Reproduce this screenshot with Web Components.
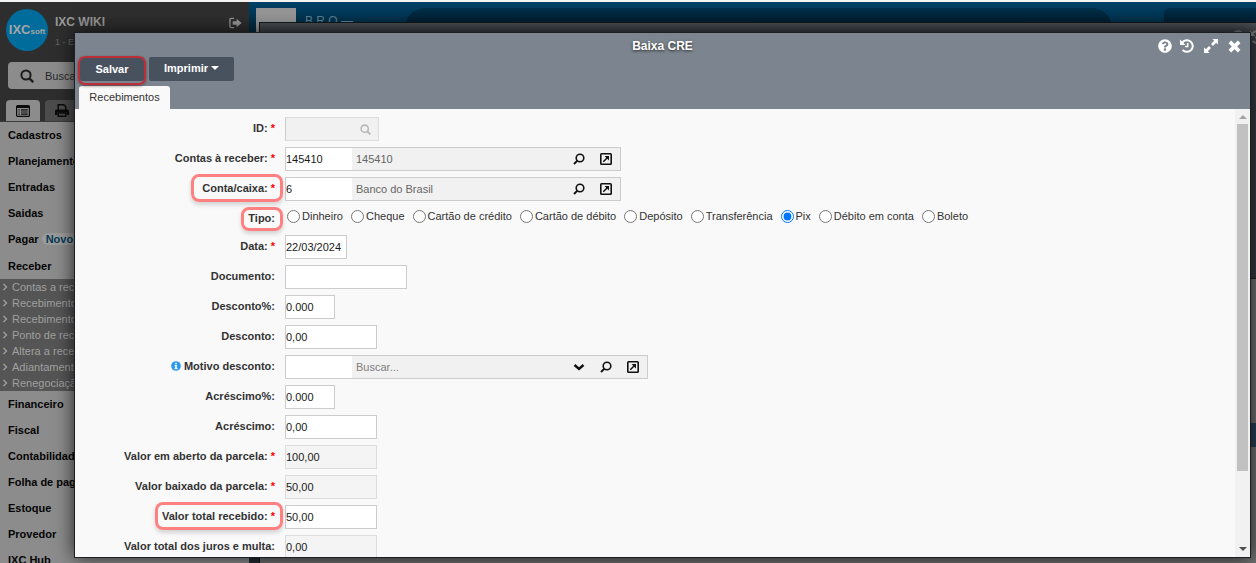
<!DOCTYPE html>
<html lang="pt-BR">
<head>
<meta charset="utf-8">
<title>Baixa CRE</title>
<style>
  html, body { height: 100%; margin: 0; }
  body { font: 11px/16px "Liberation Sans", Arial, sans-serif; color: #333; overflow: hidden; }
</style>
</head>
<body>
<app-shell>
  <side-menu slot="side"></side-menu>
  <back-desktop slot="main"></back-desktop>
  <modal-window slot="modal" heading="Baixa CRE">
    <form-field label="ID" required kind="id"></form-field>
    <form-field label="Contas à receber" required kind="lookup" value="145410" text="145410"></form-field>
    <form-field label="Conta/caixa" required kind="lookup" value="6" text="Banco do Brasil" mark="wide"></form-field>
    <radio-field label="Tipo" selected="Pix" options="Dinheiro|Cheque|Cartão de crédito|Cartão de débito|Depósito|Transferência|Pix|Débito em conta|Boleto"></radio-field>
    <form-field label="Data" required value="22/03/2024" size="date"></form-field>
    <form-field label="Documento" size="doc"></form-field>
    <form-field label="Desconto%" value="0.000" size="percent"></form-field>
    <form-field label="Desconto" value="0,00"></form-field>
    <form-field label="Motivo desconto" kind="lookup" hint="Buscar..." info></form-field>
    <form-field label="Acréscimo%" value="0.000" size="percent"></form-field>
    <form-field label="Acréscimo" value="0,00"></form-field>
    <form-field label="Valor em aberto da parcela" required value="100,00" locked></form-field>
    <form-field label="Valor baixado da parcela" required value="50,00" locked></form-field>
    <form-field label="Valor total recebido" required value="50,00" mark></form-field>
    <form-field label="Valor total dos juros e multa" value="0,00" locked></form-field>
  </modal-window>
</app-shell>

<script>
const define = (name, render) => customElements.define(name, class extends HTMLElement {
  constructor() { super(); this.attachShadow({ mode: 'open' }); }
  connectedCallback() {
    if (this.shadowRoot.childNodes.length) return;
    const t = document.createElement('template');
    t.innerHTML = '<style>:host,*,*::before,*::after{box-sizing:border-box}</style>' + render(this);
    this.shadowRoot.append(t.content.cloneNode(true));
  }
});

const ICONS = {
  help: ['0 0 512 512', '<path fill="currentColor" d="M504 256c0 136.997-111.043 248-248 248S8 392.997 8 256C8 119.083 119.043 8 256 8s248 111.083 248 248zM262.655 90c-54.497 0-89.255 22.957-116.549 63.758-3.536 5.286-2.353 12.415 2.715 16.258l34.699 26.31c5.205 3.947 12.621 3.008 16.665-2.122 17.864-22.658 30.113-35.797 57.303-35.797 20.429 0 45.698 13.148 45.698 32.958 0 14.976-12.363 22.667-32.534 33.976C247.128 238.528 216 254.941 216 296v4c0 6.627 5.373 12 12 12h56c6.627 0 12-5.373 12-12v-1.333c0-28.462 83.186-29.647 83.186-106.667 0-58.002-60.165-102-116.531-102zM256 338c-25.365 0-46 20.635-46 46 0 25.364 20.635 46 46 46s46-20.636 46-46c0-25.365-20.635-46-46-46z"/>'],
  history: ['0 0 14 14', '<g fill="none" stroke="currentColor"><path stroke-width="2" d="M2.3 3.6A5.8 5.8 0 1 1 2.6 10.9"/><path stroke-width="1.5" d="M7.7 4v3.6H5"/></g><path fill="currentColor" d="M0 .6V6h5.4z"/>'],
  expand: ['0 0 14 14', '<path fill="currentColor" d="M8.400 0H14v5.600L12.200 3.800 9 7 7 5l3.200-3.200zM5.600 14H0V8.400l1.800 1.800L5 7l2 2-3.200 3.200z"/>'],
  close: ['0 0 14 14', '<path stroke="currentColor" stroke-width="4" d="M2 2l10 10M12 2L2 12"/>'],
  search: ['0 0 14 14', '<g fill="none" stroke="currentColor" stroke-width="2"><circle cx="6" cy="6" r="4.600"/><path stroke-width="2.400" d="M9.500 9.500l3.700 3.700"/></g>'],
  lens: ['0 0 12 12', '<g fill="none" stroke="currentColor" stroke-width="1.600"><circle cx="7" cy="5" r="3.800"/><path stroke-width="2" d="M4.400 7.600L1 11"/></g>'],
  open: ['0 0 12 12', '<rect x=".8" y=".8" width="10.400" height="10.400" rx=".8" fill="none" stroke="currentColor" stroke-width="1.600"/><path stroke="currentColor" stroke-width="1.500" d="M3.300 8.700l4-4"/><path fill="currentColor" d="M4.500 3H9v4.500z"/>'],
  down: ['0 0 12 12', '<path fill="none" stroke="currentColor" stroke-width="2.400" d="M1.500 4L6 8l4.500-4"/>'],
  info: ['0 0 12 12', '<circle cx="6" cy="6" r="5.800" fill="currentColor"/><path fill="#fff" d="M5 2h2v1.800H5zM4.300 4.800H7v3.600h.8v1.400H4.300V8.400H5V6.200h-.7z"/>'],
  logout: ['0 0 14 12', '<path fill="none" stroke="currentColor" stroke-width="1.400" d="M5.500 1H2.200Q1 1 1 2.200v7.600Q1 11 2.200 11h3.300"/><path fill="currentColor" d="M4 4h4.200V1.400L13.600 6 8.200 10.600V8H4z"/>'],
  list: ['0 0 14 12', '<rect x=".6" y=".6" width="12.800" height="10.800" rx="1" fill="none" stroke="currentColor" stroke-width="1.200"/><path fill="currentColor" d="M1 1h12v2H1zM2.500 4.200h1.300v1.200H2.500zM5 4.200h6.800v1.200H5zM2.500 6.400h1.300v1.200H2.500zM5 6.400h6.800v1.200H5zM2.500 8.600h1.300v1.200H2.500zM5 8.600h6.800v1.200H5z"/>'],
  print: ['0 0 14 13', '<path fill="none" stroke="currentColor" stroke-width="1.400" d="M3.200 6V.8h5.600l2 2V6M3.200 9h7.600v3.200H3.200z"/><path fill="currentColor" d="M0 7.200Q0 5.600 1.600 5.600h10.800Q14 5.600 14 7.200V11h-2.400V8.400H2.400V11H0z"/>'],
  angle: ['0 0 6 8', '<path fill="none" stroke="currentColor" stroke-width="1.300" d="M1.500 1l3 3-3 3"/>']
};
const icon = (n, w, h = w) => `<svg width="${w}" height="${h}" viewBox="${ICONS[n][0]}" aria-hidden="true">${ICONS[n][1]}</svg>`;

define('app-shell', () => `
<style>
  :host { display: flex; position: relative; height: 100vh; overflow: hidden; border-top: 2px solid #f5f2f2; background: #707070; }
  .side { flex: 0 0 249px; }
  .main { flex: 1; min-width: 0; }
  .modal { position: absolute; inset: 30px 5px 5px 74px; }
  ::slotted(*) { height: 100%; }
</style>
<div class="side"><slot name="side"></slot></div>
<div class="main"><slot name="main"></slot></div>
<div class="modal"><slot name="modal"></slot></div>`);

define('side-menu', () => {
  const item = t => `<li><a href="#">${t}</a></li>`;
  const sub = ['Contas a receber', 'Recebimentos', 'Recebimentos', 'Ponto de recebimento', 'Altera a receber', 'Adiantamentos', 'Renegociação'];
  return `
<style>
  :host { display: flex; flex-direction: column; background: #8c8c8c; overflow: hidden; color: #050505; }
  header { background: #2e2e2e; color: #999; padding: 7px 7px 0 6px; height: 120px; display: flex; flex-direction: column; border-bottom: 1px solid #3c3c3c; flex: none; }
  .who { display: flex; gap: 7px; height: 42px; }
  .logo { width: 42px; height: 42px; border-radius: 50%; background: #006c9c; color: #a5a5a5; font: bold 13px/42px "Liberation Sans", sans-serif; text-align: center; white-space: nowrap; }
  .logo small { font-size: 8px; }
  .name { flex: 1; display: flex; flex-direction: column; gap: 4px; padding-top: 5px; font-size: 12px; }
  .name span { font-size: 9px; color: #666; }
  .who button { align-self: flex-start; margin-top: 8px; }
  button { border: 0; background: none; color: inherit; padding: 0; display: grid; place-items: center; }
  .find { display: flex; align-items: center; gap: 11px; height: 27px; margin: 11px 0 0 2px; padding-left: 12px; border-radius: 4px; background: #8c8c8c; color: #1c1c1c; }
  .find input { border: 0; background: none; font: inherit; padding: 0; flex: 1; min-width: 0; outline: 0; }
  .find input::placeholder { color: #2a2a2a; }
  nav { display: flex; gap: 5px; margin-top: auto; }
  nav button { width: 34px; height: 21px; border-radius: 4px 4px 0 0; background: #4c4c4c; color: #0a0a0a; }
  nav button.on { background: #8c8c8c; }
  ul { list-style: none; margin: 0; padding: 0; }
  a { color: inherit; text-decoration: none; }
  .menu > li { font-weight: bold; line-height: 26px; padding-left: 8px; }
  .menu > li.tall { line-height: 27px; }
  mark { background: #9b9b9b; color: #073b57; border-radius: 6px; padding: 0 4px; line-height: 12px; }
  .sub { background: #555; color: #a0a0a0; font-weight: normal; margin-left: -8px; }
  .sub li { display: flex; align-items: center; gap: 4px; padding-left: 2px; line-height: 16px; white-space: nowrap; }
</style>
<header>
  <div class="who"><div class="logo">IXC<small>soft</small></div><div class="name"><b>IXC WIKI</b><span>1 - Empresa</span></div><button aria-label="Sair">${icon('logout', 13, 12)}</button></div>
  <label class="find">${icon('search', 14)}<input placeholder="Buscar" aria-label="Buscar"></label>
  <nav><button class="on" aria-label="Menu">${icon('list', 14, 12)}</button><button aria-label="Imprimir">${icon('print', 14, 13)}</button></nav>
</header>
<ul class="menu">
  ${['Cadastros', 'Planejamento', 'Entradas', 'Saidas'].map(item).join('')}
  <li class="tall"><a href="#">Pagar</a> <mark>Novo!</mark></li>
  <li><a href="#">Receber</a><ul class="sub">${sub.map(t => `<li>${icon('angle', 6, 8)}<a href="#">${t}</a></li>`).join('')}</ul></li>
  ${['Financeiro', 'Fiscal', 'Contabilidade', 'Folha de pagamento', 'Estoque', 'Provedor', 'IXC Hub'].map(item).join('')}
</ul>`;
});

define('back-desktop', () => `
<style>
  :host { display: block; position: relative; background: #242c33; overflow: hidden; }
  .bar { display: flex; height: 40px; padding: 6px 0 0 7px; background: linear-gradient(#004468, #00395a 10px, #002c44 22px); }
  .pic { width: 40px; background: #969696; }
  .brand { width: 100px; margin: 5px 0 0 9px; font-size: 12px; color: #5c7f90; white-space: pre; }
  .pill { flex: 1; border-radius: 20px 20px 0 0; background: linear-gradient(#00304a, #001a2a 16px); }
  .box { width: 92px; margin-left: 52px; border-radius: 5px 0 0 0; background: linear-gradient(#00304a, #001a2a 16px); }
  .win { position: absolute; inset: 20px 0 0 10px; border: solid #14171a; border-width: 1px 0 0 1px; display: flex; flex-direction: column; background: #707070; }
  .head { height: 256px; background: linear-gradient(#4a4e52, #343a3f 12px, #343a3f); border-bottom: 1px solid #1c2024; }
  .row { height: 24px; margin-top: 144px; background: #2a3f52; }
  .tools { display: flex; justify-content: flex-end; gap: 5px; padding-top: 7px; margin-right: -8px; color: #777; }
</style>
<div class="bar"><div class="pic"></div><div class="brand">B R O —</div><div class="pill"></div><div class="box"></div></div>
<div class="win"><div class="head"><div class="tools">${icon('help', 14)}${icon('history', 14)}</div></div><div class="row"></div></div>`);

define('modal-window', el => `
<style>
  :host { display: flex; flex-direction: column; border: 1px solid #1b1f23; background: #f9f9f9; box-shadow: 0 0 18px rgba(0,0,0,.75); }
  header { flex: none; background: #7c858f; display: grid; grid-template-columns: 1fr auto 1fr; grid-template-rows: 24px 24px 28px; color: #fff; }
  h1 { grid-column: 2; margin: 0; font-size: 12px; line-height: 26px; text-shadow: 0 1px 3px #222; }
  .tools { grid-column: 3; display: flex; justify-content: flex-end; align-items: center; gap: 8px; padding: 2px 9px 0 0; }
  button { font: bold 11px/16px "Liberation Sans", Arial, sans-serif; color: #fff; border: 0; padding: 0; background: none; display: flex; align-items: center; justify-content: center; }
  .tools .wide { padding-left: 2px; }
  .bar { grid-column: 1 / 4; display: flex; gap: 5px; padding-left: 5px; }
  .bar button { position: relative; width: 85px; height: 24px; background: #48525e; border-radius: 2px; gap: 3px; }
  .bar .menu { padding-bottom: 2px; }
  .bar .save { width: 64px; }
  .save::after { content: ""; position: absolute; inset: -1px -2px -4px -2px; border: 2px solid #bd2f38; border-radius: 7px; box-shadow: 0 1px 3px rgba(60,0,0,.5); }
  .caret { border: solid transparent; border-width: 4px 4px 0; border-top-color: #fff; }
  .tabs { grid-column: 1 / 4; display: flex; align-items: flex-end; padding-left: 4px; }
  .tabs button { font-weight: normal; color: #333; background: #f9f9f9; height: 23px; padding: 0 10px 2px; min-width: 91px; border-radius: 3px 3px 0 0; }
  .body { flex: 1; min-height: 0; display: flex; }
  form { flex: 1; min-width: 0; overflow-y: auto; scrollbar-width: none; padding: 8px 0; display: flex; flex-direction: column; gap: 6px; }
  .scroll { width: 15px; background: #f1f1f1; display: flex; flex-direction: column; align-items: center; padding: 6px 0; }
  .up, .dn { flex: none; border: solid transparent; border-width: 0 4px 4px; border-bottom-color: #a3a3a3; }
  .dn { border-width: 4px 4px 0; border-top-color: #505050; }
  .track { flex: 1; align-self: stretch; margin: 5px 2px; }
  .thumb { height: 83%; background: #c1c1c1; }
</style>
<header>
  <h1>${el.getAttribute('heading')}</h1>
  <div class="tools"><button aria-label="Ajuda">${icon('help', 14)}</button><button aria-label="Histórico">${icon('history', 14)}</button><button class="wide" aria-label="Expandir">${icon('expand', 14)}</button><button class="wide" aria-label="Fechar">${icon('close', 13)}</button></div>
  <div class="bar"><button class="save">Salvar</button><button class="menu">Imprimir<span class="caret"></span></button></div>
  <div class="tabs"><button>Recebimentos</button></div>
</header>
<div class="body"><form><slot></slot></form><div class="scroll"><i class="up"></i><div class="track"><div class="thumb"></div></div><i class="dn"></i></div></div>`);

const ROW_CSS = `
  :host { display: grid; grid-template-columns: 200px 1fr; column-gap: 10px; flex: none; }
  .label { justify-self: end; position: relative; display: flex; align-items: center; gap: 3px; height: 22px; font-weight: bold; white-space: nowrap; }
  .label b { color: #f00; }
  .label svg { color: #2a97f0; }
  .mark::after { content: ""; position: absolute; inset: -3px -8px -3px -7px; border: 3px solid #ff8080; border-radius: 8px; box-shadow: 0 3px 4px rgba(0,0,0,.15); }
  .mark.wide::after { left: -11px; }
  .mark.low::after { inset: 0 -8px -2px -7px; }`;

define('form-field', el => {
  const a = n => el.getAttribute(n) || '', has = n => el.hasAttribute(n);
  const kind = a('kind'), size = a('size') || 'money';
  const label = `<label for="f" class="label ${has('mark') ? 'mark ' + a('mark') : ''}">${has('info') ? icon('info', 10) : ''}<span>${a('label')}:</span>${has('required') ? '<b>*</b>' : ''}</label>`;
  let field;
  if (kind === 'id') field = `<div class="combo id"><input id="f" disabled><button type="button" disabled aria-label="Pesquisar">${icon('search', 11)}</button></div>`;
  else if (kind === 'lookup') field = `<div class="combo ${has('hint') ? 'long' : ''}"><input id="f" value="${a('value')}"><input class="text" aria-label="Descrição" readonly value="${a('text')}" placeholder="${a('hint')}">${has('hint') ? `<button type="button" aria-label="Abrir lista">${icon('down', 12)}</button>` : ''}<button type="button" aria-label="Pesquisar">${icon('lens', 12)}</button><button type="button" aria-label="Abrir cadastro">${icon('open', 12)}</button></div>`;
  else field = `<input id="f" class="box ${size}" value="${a('value')}" ${has('locked') ? 'readonly' : ''}>`;
  return `
<style>${ROW_CSS}
  input { font: inherit; color: #1a1a1a; margin: 0; padding: 0; border: 0; background: #fff; outline: 0; border-radius: 0; min-width: 0; }
  .box { height: 24px; border: 1px solid #ccc; }
  .box[readonly] { background: #f4f4f4; border-color: #ddd; }
  .date { width: 62px; } .doc { width: 122px; } .percent { width: 50px; } .money { width: 92px; }
  .combo { display: flex; width: 336px; height: 24px; border: 1px solid #ccc; background: #f1f1f1; }
  .combo.long { width: 363px; }
  .combo input { width: 66px; flex: none; }
  .combo .text { flex: 1; background: none; padding-left: 4px; color: #666; }
  .text::placeholder { color: #808080; opacity: 1; }
  .combo button { width: 27px; padding: 0 2px 0 0; border: 0; background: none; display: grid; place-items: center; color: #111; }
  .combo.id { width: 94px; border-color: #ddd; border-left-color: #ccc; }
  .combo.id input { background: #f1f1f1; }
  .combo.id button { width: 26px; padding: 0; color: #b8b8b8; }
</style>${label}${field}`;
});

define('radio-field', el => `
<style>${ROW_CSS}
  .set { display: flex; flex-wrap: wrap; gap: 8px; padding-left: 2px; height: 18px; }
  .set label { display: flex; align-items: center; gap: 2px; }
  input { width: 13px; height: 13px; margin: 0; }
</style>
<span class="label mark low" id="l">${el.getAttribute('label')}:</span>
<div class="set" role="radiogroup" aria-labelledby="l">${el.getAttribute('options').split('|').map(o => `<label><input type="radio" name="tipo"${o === el.getAttribute('selected') ? ' checked' : ''}>${o}</label>`).join('')}</div>`);
</script>
</body>
</html>
